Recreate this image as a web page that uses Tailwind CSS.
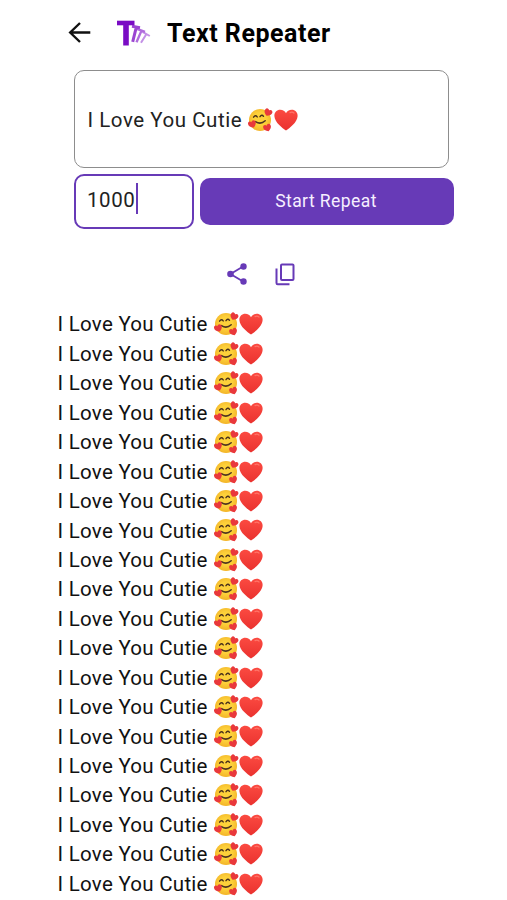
<!DOCTYPE html>
<html lang="en">
<head>
<meta charset="utf-8">
<title>Text Repeater</title>
<script src="https://cdn.jsdelivr.net/npm/@tailwindcss/browser@4"></script>
</head>
<body class="w-[507px] h-[900px] overflow-hidden bg-white font-[Roboto,'Liberation_Sans',sans-serif]">
<svg class="absolute h-0 w-0">
  <defs>
    <radialGradient id="skin" cx=".5" cy=".45" r=".55"><stop offset=".5" stop-color="#fdd13a"/><stop offset="1" stop-color="#f3b428"/></radialGradient>
    <linearGradient id="red" x1="0" y1="0" x2="0" y2="1"><stop offset="0" stop-color="#fb4a41"/><stop offset="1" stop-color="#ea322f"/></linearGradient>
    <path id="mini" d="M0 4.200C-3.200 2.800-4.700.8-4.100-1.600-3.400-3.900-.9-3.700 0-1.900 1-3.700 3.600-3.500 4.100-1.300 4.400.8 2.800 2.800 0 4.200Z" fill="#e9383b"/>
    <symbol id="love" viewBox="0 0 25 24">
      <circle cx="12" cy="12" r="11" fill="url(#skin)"/>
      <path d="M5.600 9.200Q7.400 6.400 9.200 8.900M12 8.700Q13.800 6 15.500 8.300" fill="none" stroke="#49301c" stroke-width="1.400" stroke-linecap="round"/>
      <path d="M7.500 13.600Q12.500 17 17.200 12.800" fill="none" stroke="#4e3420" stroke-width="1.500" stroke-linecap="round"/>
      <use href="#mini" transform="translate(4.200 15.800) rotate(-25) scale(.95)"/>
      <use href="#mini" transform="translate(20.300 4.200) rotate(25) scale(.95)"/>
      <use href="#mini" transform="translate(19.300 19.400) rotate(-20) scale(.95)"/>
    </symbol>
    <symbol id="heart" viewBox="0 0 24 24">
      <path d="M12 22.500C8.500 20 .8 14.500.4 8.200.1 4.300 3 1.800 6.200 1.800 8.900 1.800 11.100 3.300 12 5.200 12.900 3.300 15.100 1.800 17.800 1.800 21 1.800 23.900 4.300 23.600 8.200 23.200 14.500 15.500 20 12 22.500Z" fill="url(#red)"/>
      <path d="M16 4.600Q18.300 3.600 20 5" fill="none" stroke="#ff7468" stroke-width="1.200" stroke-linecap="round"/>
    </symbol>
  </defs>
</svg>

<header class="flex h-[65px] items-center pl-[68px]">
  <svg class="h-[22px] w-[23px]" viewBox="0 0 23 22" fill="none" stroke="#111" stroke-width="2.400"><path d="M22.300 10.500H2.500M12 1 2.200 10.500 12 20"/></svg>
  <svg class="ml-[25px] h-[28px] w-[36px]" viewBox="0 0 36 28">
    <g fill="none">
      <g stroke="#c390e6" stroke-width="2"><path d="M26.500 12.800 33.800 17M30.300 15.300 25 23.800"/></g>
      <g stroke="#b06cdd" stroke-width="2.400"><path d="M21 9.800 29 12.900M25.500 11.600 20.500 23.300"/></g>
      <g stroke="#9b45d2" stroke-width="3"><path d="M16 7.300 24 8.800M20.300 8.200 16.700 22.800"/></g>
      <path d="M1 4H18.500" stroke="#7a0cc4" stroke-width="4.600"/>
      <path d="M10 4V26.500" stroke="#7a0cc4" stroke-width="5.600"/>
    </g>
  </svg>
  <h1 class="ml-[15px] pt-[3px] text-[25px] leading-[30px] font-bold tracking-[0.520px] text-black">Text Repeater</h1>
</header>

<main>
  <section class="pl-[74px]">
    <div class="mt-[5px] flex h-[98px] w-[375px] items-center rounded-[10px] border border-[#8d8d8d] pt-[2px] pl-[12.500px]">
      <span class="text-[20.500px] tracking-[0.540px] text-[#222]">I Love You Cutie</span>
      <svg class="ml-[6px] h-[24px] w-[25px]"><use href="#love"/></svg>
      <svg class="ml-[1px] h-[24px] w-[24px]"><use href="#heart"/></svg>
    </div>
    <div class="mt-[6px] flex items-center gap-[6px]">
      <div class="flex h-[55px] w-[120px] items-center rounded-[10px] border-2 border-[#673ab7] pl-[11px] pb-[6px]">
        <span class="pt-[3px] text-[20.500px] tracking-[0.600px] text-[#222]">1000</span>
        <span class="ml-[0.500px] h-[31px] w-[2px] bg-[#673ab7]"></span>
      </div>
      <button class="h-[47px] w-[254px] rounded-[10px] bg-[#673ab7] pr-[2px] text-[17.500px] tracking-[0.430px] text-[#f6efff]">Start Repeat</button>
    </div>
  </section>

  <div class="mt-[32px] ml-[227px] flex h-[26px] items-center gap-[28px]">
    <svg class="h-[22px] w-[20px]" viewBox="0 0 20 22" fill="#673ab7"><path d="M16.500 3.300 3.500 11 16.500 18.700" fill="none" stroke="#673ab7" stroke-width="1.800"/><circle cx="16.500" cy="3.500" r="3.200"/><circle cx="3.500" cy="11" r="3.300"/><circle cx="16.500" cy="18.500" r="3.200"/></svg>
    <svg class="h-[23px] w-[20px]" viewBox="0 0 20 23" fill="none" stroke="#673ab7" stroke-width="2"><rect x="6" y="1.500" width="12.500" height="15.500" rx="1"/><path d="M1.500 5.500V20Q1.500 21.200 2.700 21.200H14.500"/></svg>
  </div>

  <ol id="results" class="mt-[22.600px] pl-[57.500px]"></ol>
</main>

<template id="row">
  <li class="flex h-[29.450px] items-center">
    <span class="pt-px text-[20.500px] tracking-[0.270px] text-[#111]">I Love You Cutie</span>
    <svg class="ml-[6px] h-[24px] w-[25px]"><use href="#love"/></svg>
    <svg class="ml-[0.500px] h-[24px] w-[24px]"><use href="#heart"/></svg>
  </li>
</template>
<script>
  const list = document.getElementById('results');
  const row = document.getElementById('row');
  for (let i = 0; i < 20; i++) list.append(row.content.cloneNode(true));
</script>
</body>
</html>
